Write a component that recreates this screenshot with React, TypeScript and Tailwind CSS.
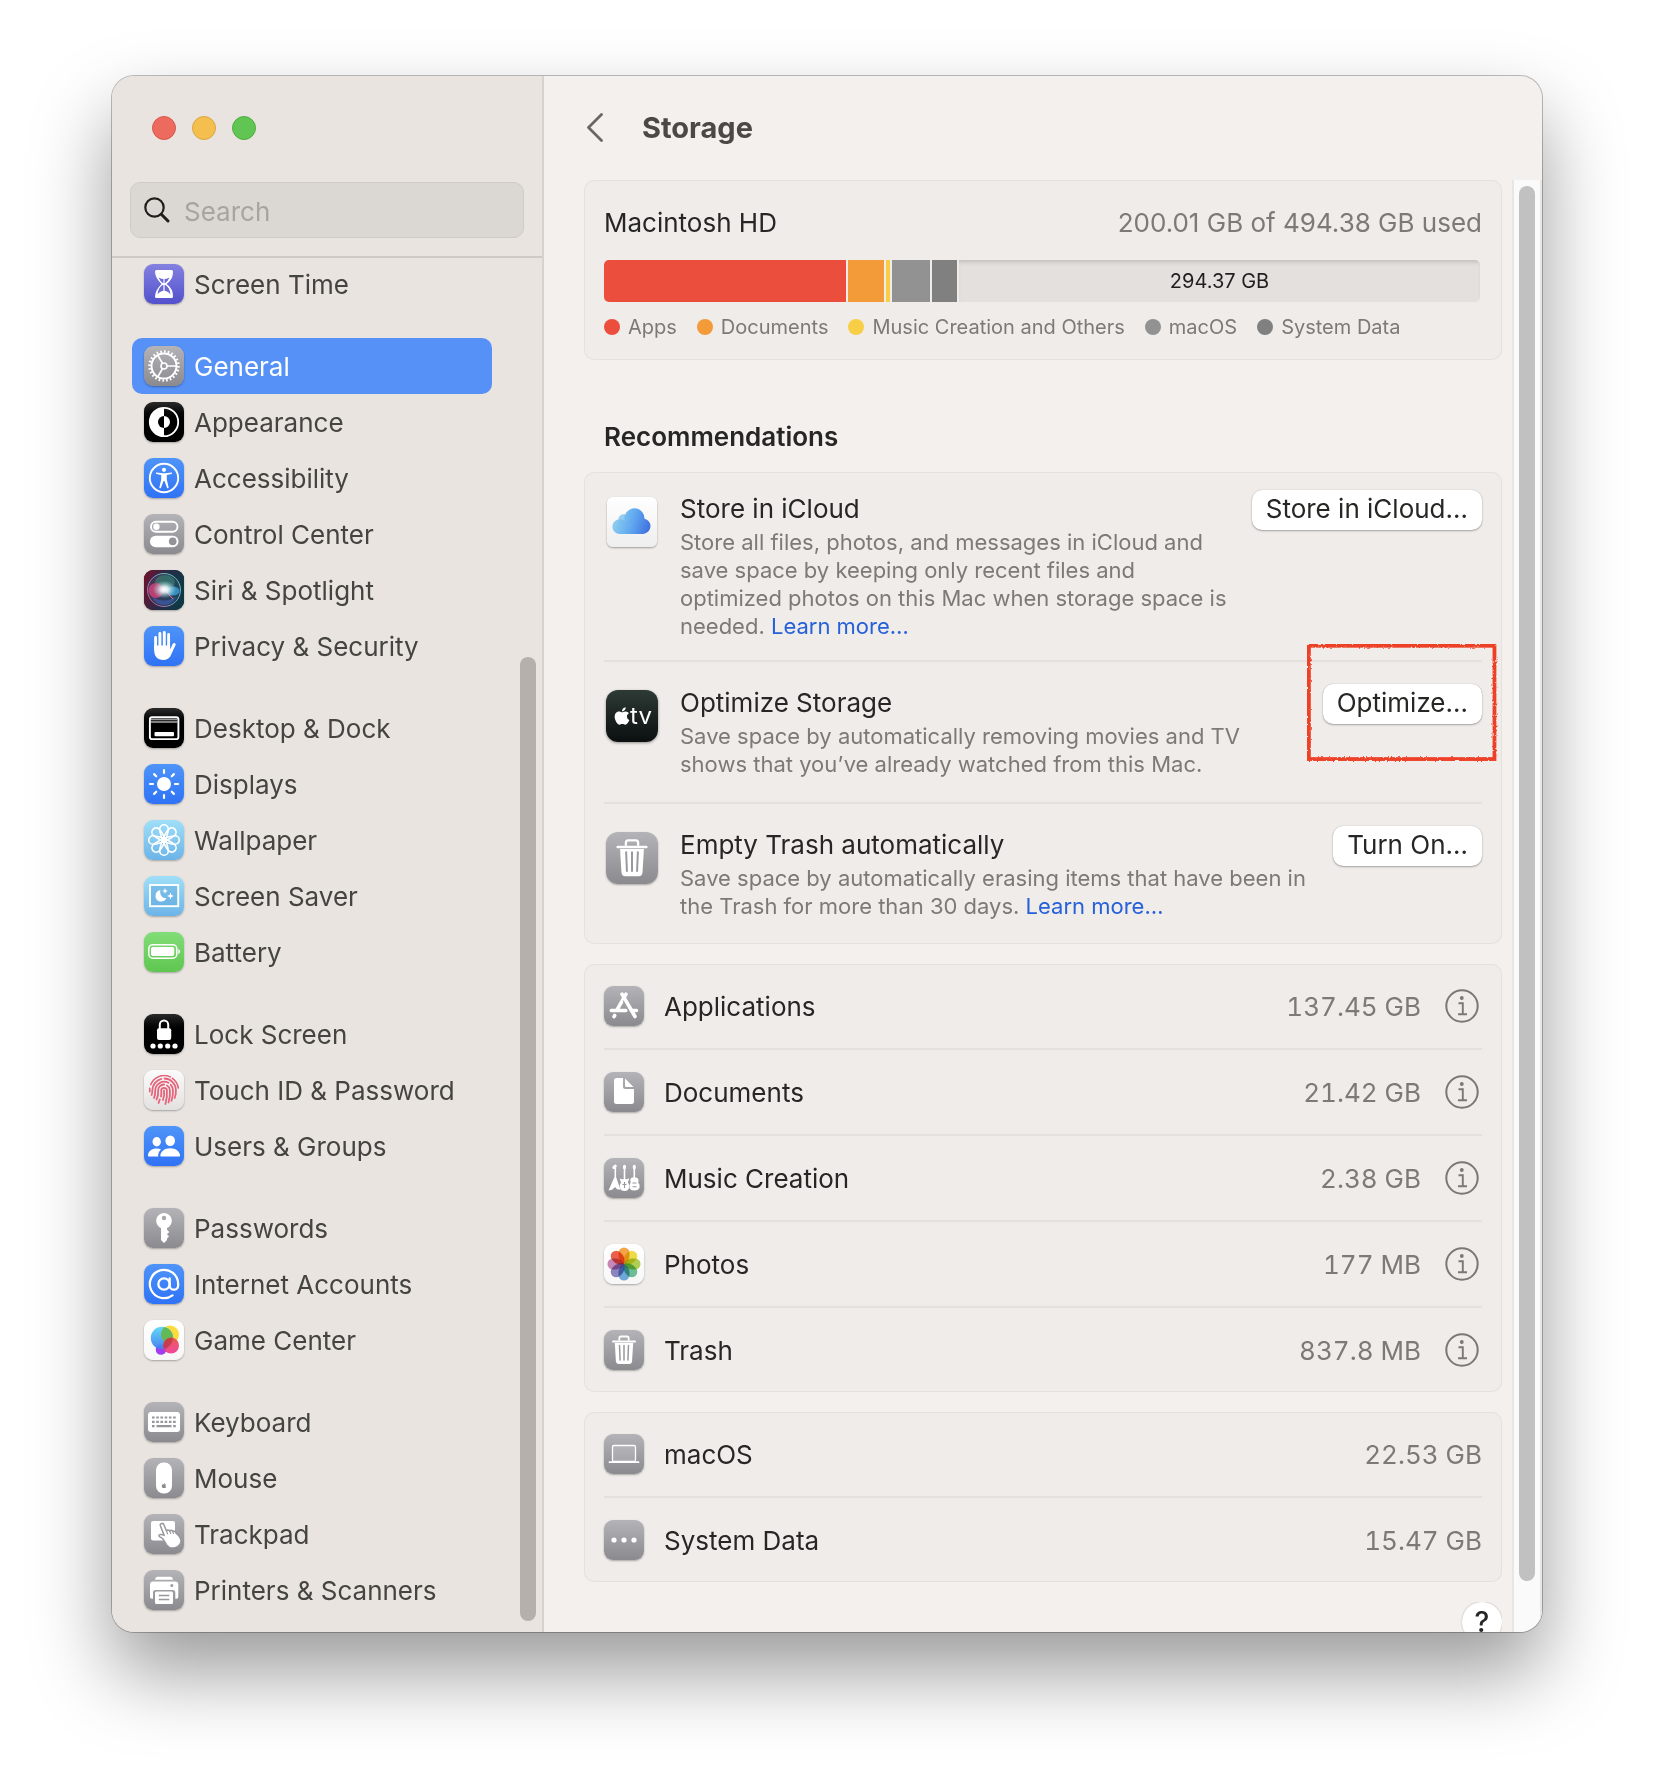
import { useId, type ReactNode } from "react";
import { AtSign } from "lucide-react";
import { FaApple } from "react-icons/fa";

const tones = {
  gray: "bg-linear-to-b from-[#b4b3b8] to-[#8b8a8f]",
  black: "bg-linear-to-b from-[#2b2b2b] via-black to-black",
  blue: "bg-linear-to-b from-[#4f94f8] to-[#2f72f6]",
  indigo: "bg-linear-to-b from-[#8481e0] to-[#5350cc]",
  sky: "bg-linear-to-b from-[#9fdff8] to-[#6cb4e8]",
  green: "bg-linear-to-b from-[#82dd78] to-[#5ec64f]",
  white: "bg-linear-to-b from-white to-[#f7f7f7]",
  silver: "bg-linear-to-b from-[#fbfbfb] to-[#e3e1e0]",
};

type Tone = keyof typeof tones;
type Item = { label: string; tone: Tone; icon: ReactNode };

function Glyph({ children }: { children: ReactNode }) {
  return (
    <svg viewBox="0 0 40 40" className="size-full" fill="none" aria-hidden="true">
      {children}
    </svg>
  );
}

function Tile({ tone, large, children }: { tone: Tone; large?: boolean; children: ReactNode }) {
  const size = large ? "size-[52px] rounded-xl" : "size-10 rounded-[9px]";
  return (
    <span
      className={`flex shrink-0 items-center justify-center overflow-hidden text-white shadow-[0_1px_2px_rgba(0,0,0,0.3)] ${size} ${tones[tone]}`}
    >
      {children}
    </span>
  );
}

const around = [0, 45, 90, 135, 180, 225, 270, 315];

function HourglassIcon() {
  return (
    <Glyph>
      <path
        fill="#fff"
        d="M12.5 6h15q1.500 0 1.500 1.500C29 13.500 27 16.500 22.500 20 27 23.500 29 26.500 29 32.500q0 1.500-1.500 1.500h-15Q11 34 11 32.500 11 26.500 17.500 20 11 13.500 11 7.500 11 6 12.500 6Z"
      />
      <path
        fill="#6c69d5"
        d="M14.500 13.500q5.500 3 11 0-1.500 3.500-4.500 5.700h-2q-3-2.200-4.500-5.700ZM18.500 21h3c3 2 4.500 5 5 9.500-2-2.500-4-3.500-6.500-3.700-2.500.2-4.500 1.200-6.500 3.700.5-4.500 2-7.500 5-9.500Z"
      />
      <path stroke="#fff" strokeWidth="1.2" d="M20 15v14" />
    </Glyph>
  );
}

function GearIcon() {
  return (
    <Glyph>
      <g stroke="#fff">
        <circle cx="20" cy="20" r="12.5" strokeWidth="2" />
        <circle cx="20" cy="20" r="14.5" strokeWidth="2.5" pathLength="72" strokeDasharray="1.3 1.7" />
        <circle cx="20" cy="20" r="3" strokeWidth="1.6" />
        <path strokeWidth="1.7" d="M23 20h9M18.500 17.400 13.800 9.300M18.500 22.600l-4.700 8.100" />
      </g>
    </Glyph>
  );
}

function AppearanceIcon() {
  return (
    <Glyph>
      <circle cx="20" cy="20" r="14.2" stroke="#fff" strokeWidth="1.8" />
      <path fill="#fff" d="M20 5.800a14.200 14.200 0 0 0 0 28.400ZM20 14a6 6 0 0 1 0 12Z" />
      <path fill="#000" d="M20 14a6 6 0 0 0 0 12Z" />
    </Glyph>
  );
}

function AccessibilityIcon() {
  return (
    <Glyph>
      <circle cx="20" cy="20" r="14.2" stroke="#fff" strokeWidth="1.9" />
      <circle cx="20" cy="11.8" r="2.1" fill="#fff" />
      <path
        fill="#fff"
        d="M12.800 14.400 18.500 15.200h3l5.700-.8a.8.800 0 0 1 .2 1.600l-4.600 1v4.500l1.800 7.700a.8.800 0 0 1-1.600.5L20.500 23h-1L17 29.700a.8.800 0 0 1-1.600-.5l1.800-7.700V17l-4.600-1a.8.800 0 0 1 .2-1.600Z"
      />
    </Glyph>
  );
}

function ControlCenterIcon() {
  return (
    <Glyph>
      <rect x="7" y="7.7" width="26.5" height="10" rx="5" stroke="#fff" strokeWidth="1.9" />
      <circle cx="12.4" cy="12.7" r="3.2" fill="#fff" />
      <rect x="6" y="21.7" width="28.5" height="11.5" rx="5.7" fill="#fff" />
      <circle cx="28.7" cy="27.4" r="3.8" fill="#949398" />
    </Glyph>
  );
}

function SiriIcon() {
  const id = useId();
  return (
    <Glyph>
      <defs>
        <linearGradient id={`${id}bg`} x1="0" y1="0.3" x2="1" y2="0.6">
          <stop offset="0" stopColor="#6a1430" />
          <stop offset="0.5" stopColor="#262c48" />
          <stop offset="1" stopColor="#0d3a44" />
        </linearGradient>
        <radialGradient id={`${id}glow`}>
          <stop offset="0" stopColor="#fff" />
          <stop offset="0.3" stopColor="#f1fafc" stopOpacity="0.9" />
          <stop offset="1" stopColor="#8fd6dd" stopOpacity="0" />
        </radialGradient>
        <linearGradient id={`${id}ring`} x1="0" y1="1" x2="1" y2="0">
          <stop offset="0" stopColor="#d8447a" />
          <stop offset="0.5" stopColor="#6c9fd8" />
          <stop offset="1" stopColor="#5fd0a0" />
        </linearGradient>
      </defs>
      <rect width="40" height="40" fill={`url(#${id}bg)`} />
      <circle cx="20" cy="20" r="16.5" fill="#3b5878" fillOpacity="0.4" stroke={`url(#${id}ring)`} strokeWidth="1" />
      <ellipse cx="21" cy="12" rx="10" ry="7" fill="#3fae84" fillOpacity="0.4" />
      <circle cx="12" cy="20.5" r="7.5" fill="#e2437d" fillOpacity="0.75" />
      <ellipse cx="29" cy="21" rx="6.5" ry="4.5" fill="#3ba5e0" fillOpacity="0.75" />
      <path d="M8 27q12 7 24 0-4 8-12 8T8 27Z" fill="#4567cc" fillOpacity="0.5" />
      <path d="m20 19 9 10" stroke="#e8739c" strokeWidth="1" />
      <ellipse cx="20.5" cy="19.5" rx="12" ry="9" fill={`url(#${id}glow)`} />
    </Glyph>
  );
}

function HandIcon() {
  return (
    <Glyph>
      <g stroke="#fff" strokeLinecap="round" strokeWidth="2.9">
        <path d="M11.600 11.500V24M15.900 7.500V22M20.300 6.500V22M24.600 8.500V24" />
        <path strokeWidth="3" d="M30.200 18.500 26.500 26" />
      </g>
      <path fill="#fff" d="M10.200 19.500h15.900v4l3-1.500c-1.200 7-3.500 12-9.600 12-6.300 0-9.300-4-9.300-9.500Z" />
    </Glyph>
  );
}

function DesktopIcon() {
  return (
    <Glyph>
      <rect x="5.9" y="9.3" width="28.5" height="21.8" rx="2.2" stroke="#fff" strokeWidth="1.9" />
      <path stroke="#9b9b9b" strokeWidth="1.4" d="M7 11.500h26.400" />
      <path stroke="#fff" strokeWidth="1" d="M7 14h26.400" />
      <rect x="10.5" y="24" width="19.5" height="4.3" rx="1" fill="#fff" />
    </Glyph>
  );
}

function SunIcon() {
  return (
    <Glyph>
      <circle cx="20" cy="20" r="7" fill="#fff" />
      {around.map((a) => (
        <path key={a} d="M20 6v3" stroke="#fff" strokeWidth="2.2" strokeLinecap="round" transform={`rotate(${a} 20 20)`} />
      ))}
    </Glyph>
  );
}

function FlowerIcon() {
  return (
    <Glyph>
      {around.map((a) => (
        <path
          key={a}
          d="M20 22C18.500 22 15.700 12 15.700 9a4.300 4.300 0 0 1 8.600 0C24.300 12 21.500 22 20 22Z"
          stroke="#fff"
          strokeWidth="1.6"
          transform={`rotate(${a} 20 20)`}
        />
      ))}
    </Glyph>
  );
}

function ScreenSaverIcon() {
  return (
    <Glyph>
      <rect x="6" y="9" width="28.2" height="21.2" stroke="#fff" strokeWidth="1.9" fill="#5fa6dc" fillOpacity="0.45" />
      <path
        fill="#fff"
        d="M16.300 14c-.8 5.200 2 8.600 6.200 8-1.200 2.400-3 3.500-5.300 3.500-3.200 0-5.700-2.300-5.700-5.600 0-2.900 1.900-5.200 4.800-5.900Z"
      />
      <path
        fill="#fff"
        d="m21 12 .8 2.200L24 15l-2.200.8L21 18l-.8-2.200L18 15l2.200-.8ZM26.500 16.500l.9 2.600 2.600.9-2.600.9-.9 2.600-.9-2.600-2.600-.9 2.600-.9Z"
      />
    </Glyph>
  );
}

function BatteryIcon() {
  return (
    <Glyph>
      <rect x="4.8" y="12.7" width="28" height="13.5" rx="4" stroke="#fff" strokeWidth="1.5" />
      <rect x="7" y="15" width="23.3" height="9" rx="2" fill="#fff" />
      <path fill="#fff" d="M34.300 17q1.800.8 1.800 2.500t-1.800 2.500Z" />
    </Glyph>
  );
}

function LockIcon() {
  return (
    <Glyph>
      <path stroke="#fff" strokeWidth="2" d="M15.800 15v-4.300a4.200 4.200 0 0 1 8.400 0V15" />
      <rect x="13" y="14.3" width="14.2" height="11.7" rx="2" fill="#fff" />
      {[9, 16.3, 23.7, 31].map((x) => (
        <circle key={x} cx={x} cy="32" r="2.6" fill="#fff" />
      ))}
    </Glyph>
  );
}

function FingerprintIcon() {
  const id = useId();
  return (
    <Glyph>
      <clipPath id={id}>
        <circle cx="20" cy="20" r="15.3" />
      </clipPath>
      <g clipPath={`url(#${id})`} stroke="#e5647c" strokeWidth="1.8" strokeLinecap="round">
        <path d="M20 20.500q.8 5-1 9.500" />
        <path d="M17 26.500q.6-3 .2-6a2.900 2.900 0 0 1 5.700-.5q.6 7-1.500 14M15.800 29.500l-1.300 3.500" />
        <path d="M12.500 29.500q2-4 1.600-8.500a6 6 0 0 1 6-6.500M23 15.500a6 6 0 0 1 2.900 4.500q.6 6-1.400 12.500" />
        <path d="M10 28q1.500-3.500 1.200-7.500a9 9 0 0 1 13.300-7.700M26.800 14.800a9 9 0 0 1 2.100 5q.5 5.500-1.400 11" />
        <path d="M7.600 25q.8-2 .7-4.500a12 12 0 0 1 9-11.600M20.500 8.500a11.800 11.800 0 0 1 11.400 11q.3 5-1.200 8.500" />
        <path d="M5.700 21.500v-3M6.700 14.500a14.600 14.600 0 0 1 19.500-7.700M28.500 8.300a14.600 14.600 0 0 1 5.900 9.500" />
      </g>
    </Glyph>
  );
}

function UsersIcon() {
  return (
    <Glyph>
      <ellipse cx="12.7" cy="15.7" rx="4.2" ry="4.7" fill="#fff" />
      <path fill="#fff" d="M4.800 30.500Q3.800 30.500 4 29c.5-4 4-6.500 8.700-6.500q2.300 0 4.300.8-2.500 2.300-2.800 5.700-.1 1 .1 1.500Z" />
      <ellipse cx="26.2" cy="14.8" rx="4.8" ry="5.3" fill="#fff" />
      <path fill="#fff" d="M17.300 30.500q-1.200 0-1-1.300c.6-4.200 4.500-7 9.900-7s9.300 2.800 9.900 7q.2 1.300-1 1.300Z" />
    </Glyph>
  );
}

function KeyIcon() {
  return (
    <Glyph>
      <path
        fill="#fff"
        fillRule="evenodd"
        d="M20 5a7.800 7.800 0 0 1 3 15v1.800l2.300 2.200-2.300 2.300 2 2.200-2 2v1.500L20 35l-3-3V20a7.800 7.800 0 0 1 3-15Zm0 2.800a2.200 2.200 0 1 0 0 4.400 2.200 2.200 0 0 0 0-4.400Z"
      />
    </Glyph>
  );
}

function GameCenterIcon() {
  const id = useId();
  return (
    <Glyph>
      <defs>
        <linearGradient id={`${id}b`} x1="0" y1="0" x2="0" y2="1">
          <stop offset="0" stopColor="#5cd6f7" />
          <stop offset="1" stopColor="#3d7df0" />
        </linearGradient>
        <linearGradient id={`${id}r`} x1="0" y1="0" x2="0" y2="1">
          <stop offset="0" stopColor="#e8504c" />
          <stop offset="1" stopColor="#f03a92" />
        </linearGradient>
      </defs>
      <circle cx="17" cy="29.5" r="5.3" fill="#a13cf0" />
      <circle cx="26" cy="14.5" r="9" fill="#fbdc3a" />
      <circle cx="18" cy="18" r="11.2" fill={`url(#${id}b)`} fillOpacity="0.95" />
      <path fill="#63b956" d="M26.800 11a11.200 11.200 0 0 1 0 12.500A9 9 0 0 1 18.600 9.500a9 9 0 0 1 1.500-2.500q4.400.8 6.700 4Z" />
      <circle cx="27" cy="25.5" r="8" fill={`url(#${id}r)`} fillOpacity="0.93" />
      <path fill="#b0333c" fillOpacity="0.6" d="M28.700 18a12 12 0 0 1-8.800 11 8 8 0 0 1 8.800-11Z" />
    </Glyph>
  );
}

function KeyboardIcon() {
  return (
    <Glyph>
      <rect x="4" y="10" width="32" height="20" rx="3" fill="#fff" />
      <g stroke="#96959a" strokeWidth="2.2">
        <path strokeDasharray="2.6 1.62" d="M8 15.500h24M8 19.800h24" />
        <path d="M8 24.100h2.600M12.500 24.100h15M29.200 24.100h2.600" />
      </g>
    </Glyph>
  );
}

function MouseIcon() {
  return (
    <Glyph>
      <rect x="12" y="4.5" width="16" height="31" rx="7.5" fill="#fff" />
      <FaApple x="17" y="24.5" size="6" color="#8b8a8f" />
    </Glyph>
  );
}

function TrackpadIcon() {
  return (
    <Glyph>
      <rect x="7" y="7" width="24" height="19.5" rx="2" fill="#fff" />
      <path
        fill="#fff"
        stroke="#98979c"
        strokeWidth="1.5"
        strokeLinejoin="round"
        d="M16.300 11.500c-.6-2 2.700-3 3.500-1l2.700 6.500c.8-1.500 2.700-1.300 3.200 0 .9-1.100 2.500-.8 3 .5 1.100-.9 2.600-.3 3 1.200l3.500 3.600c2.500 3.500 2.300 7-.5 9.500-3.700 3.400-9.300 3-12-1l-3.800-6c-1.200-1-4-2-4-3 0-1.500 2.200-1.600 4-1 .8.300 1.300.7 1.300.7Z"
      />
      <path stroke="#98979c" strokeWidth="1.1" strokeLinecap="round" d="m22.500 17 1.200 3M25.700 17l1 2.500M28.700 17.500l.8 2" />
    </Glyph>
  );
}

function PrinterIcon() {
  return (
    <Glyph>
      <path fill="#fff" d="M13.500 6.800h13q2 0 2.500 3H11q.5-3 2.500-3Z" />
      <path
        fill="#fff"
        d="M9 11.500h22q3.300 0 3.300 3.300v12q0 2-2 2h-1V22.500q0-2.500-2.500-2.500H11.500Q9 20 9 22.500v6.300H8q-2 0-2-2v-12q0-3.300 3-3.300Z"
      />
      <circle cx="27.8" cy="15.5" r="1.5" fill="#9b9a9f" />
      <rect x="11" y="21.5" width="18" height="12.5" rx="1.5" fill="#fff" />
      <path stroke="#98979c" strokeWidth="1.3" d="M14.800 25.500h10.500M14.800 29.500h10.500" />
    </Glyph>
  );
}

function AppStoreIcon() {
  return (
    <Glyph>
      <g stroke="#fff" strokeWidth="3.6" strokeLinecap="round">
        <path d="M18 8.200 31 30.500" />
        <path d="m22 8.200-8.800 15.500" />
        <path d="M7.300 24.500h14.500M28.500 24.500h4" />
        <path d="m10.700 29.500-.7 1.200" />
      </g>
      <path stroke="#a3a2a7" strokeWidth="1" d="m19 14.500 6.500 12" />
    </Glyph>
  );
}

function DocumentIcon() {
  return (
    <Glyph>
      <path
        fill="#fff"
        d="M12.500 6H19v8.500q0 2.500 2.500 2.500H30v12.500q0 2.500-2.500 2.500h-15q-2.500 0-2.500-2.500v-21Q10 6 12.500 6Z"
      />
      <path fill="#fff" d="M21 6.500 29.500 15h-7.300Q21 15 21 13.800Z" />
    </Glyph>
  );
}

function GuitarsIcon() {
  return (
    <Glyph>
      <g stroke="#fff" strokeWidth="1.6" strokeLinecap="round">
        <path d="M11.300 8.500V22M20.500 9v13M30.300 9v12" />
        <path strokeWidth="3" d="m9.800 9.500 1.500-1.500M20.500 8.300v1.500M30.300 8.300v1.500" />
      </g>
      <path fill="#fff" d="m10.200 19.500 2.200.2 4 12-3.400-.5-2-2.200-2.500 2.600-4 .8Z" />
      <path
        fill="#fff"
        d="M16 20.500q2 1.500 4.500.3 2.500 1.200 4.500-.8.300 2-1.200 4 1.800 2.500 1.400 5.500-1 3.500-4.700 3.500t-4.700-3.500q-.4-3 1.400-5.500-1.500-1.500-1.200-3.500Z"
      />
      <path
        fill="#fff"
        d="M27 20q3-1.500 6.500 0 2 2 .7 4.500 2.300 2.500 1.300 5.500-1.500 2.500-5.200 2.500T25.500 30q-.6-3 1.200-5.500-1.200-2.500.3-4.500Z"
      />
      <path stroke="#98979c" strokeWidth="1.1" d="M18.500 26.500h4M20.500 24v6M28.500 25h4M28.500 28.800h4" />
    </Glyph>
  );
}

const petals = ["#f39a2c", "#ecd92f", "#aacb3c", "#5db98a", "#5f9fd8", "#7f78b8", "#c07ab0", "#ea4a34"];

function PhotosIcon() {
  return (
    <Glyph>
      {petals.map((color, i) => (
        <path
          key={color}
          d="M20 20c-4-2.500-5.500-5.500-5.500-8.500V9a5.500 5.500 0 0 1 11 0v2.500c0 3-1.500 6-5.500 8.500Z"
          fill={color}
          fillOpacity="0.88"
          className="mix-blend-multiply"
          transform={`rotate(${i * 45} 20 20)`}
        />
      ))}
    </Glyph>
  );
}

function TrashIcon() {
  return (
    <Glyph>
      <path stroke="#fff" strokeWidth="1.8" d="M15.300 10.500V8.300q0-1.800 1.800-1.800h5.800q1.800 0 1.800 1.800v2.200" />
      <path stroke="#fff" strokeWidth="2" strokeLinecap="round" d="M9 11.500h22" />
      <path fill="#fff" d="M10.800 13h18.400l-1.100 18q-.2 3-3 3H14.900q-2.800 0-3-3Z" />
      <path stroke="#98979c" strokeWidth="1.5" strokeLinecap="round" d="m15.500 15.500.6 14.500M20 15.500V30M24.500 15.500 23.900 30" />
    </Glyph>
  );
}

function LaptopIcon() {
  return (
    <Glyph>
      <rect x="8.5" y="11.5" width="23" height="16" rx="1.5" stroke="#fff" strokeWidth="1.3" fill="#fff" fillOpacity="0.15" />
      <path stroke="#fff" strokeWidth="1.8" strokeLinecap="round" d="M5.500 28.200h29" />
    </Glyph>
  );
}

function DotsIcon() {
  return (
    <Glyph>
      {[10, 20, 30].map((x) => (
        <circle key={x} cx={x} cy="20" r="2.6" fill="#fff" />
      ))}
    </Glyph>
  );
}

function CloudIcon() {
  const id = useId();
  return (
    <Glyph>
      <defs>
        <linearGradient id={id} x1="0" y1="0.5" x2="1" y2="0.7">
          <stop offset="0" stopColor="#8fd0ef" />
          <stop offset="0.5" stopColor="#62aaf0" />
          <stop offset="1" stopColor="#4070e0" />
        </linearGradient>
      </defs>
      <path
        fill={`url(#${id})`}
        d="M10 29.500a5.800 5.800 0 0 1-1-11.500 4.500 4.500 0 0 1 5.600-4A8 8 0 0 1 30 17.300a6.200 6.200 0 0 1-.8 12.200Z"
      />
      <path fill="#fff" fillOpacity="0.2" d="M14.500 14q-1.500 3 .5 6-2-3-6-2a4.500 4.500 0 0 1 5.500-4Z" />
    </Glyph>
  );
}

function InfoIcon() {
  return (
    <svg viewBox="0 0 34 34" className="size-[34px]" fill="none" aria-hidden="true">
      <circle cx="17" cy="17" r="15.7" stroke="#7b7773" strokeWidth="2" />
      <circle cx="16.8" cy="9" r="1.9" fill="#7b7773" />
      <path stroke="#7b7773" strokeWidth="1.9" d="M13.500 14.200h4.300v10.700M13 25.200h9" />
    </svg>
  );
}

const sidebar: Item[][] = [
  [{ label: "Screen Time", tone: "indigo", icon: <HourglassIcon /> }],
  [
    { label: "General", tone: "gray", icon: <GearIcon /> },
    { label: "Appearance", tone: "black", icon: <AppearanceIcon /> },
    { label: "Accessibility", tone: "blue", icon: <AccessibilityIcon /> },
    { label: "Control Center", tone: "gray", icon: <ControlCenterIcon /> },
    { label: "Siri & Spotlight", tone: "black", icon: <SiriIcon /> },
    { label: "Privacy & Security", tone: "blue", icon: <HandIcon /> },
  ],
  [
    { label: "Desktop & Dock", tone: "black", icon: <DesktopIcon /> },
    { label: "Displays", tone: "blue", icon: <SunIcon /> },
    { label: "Wallpaper", tone: "sky", icon: <FlowerIcon /> },
    { label: "Screen Saver", tone: "sky", icon: <ScreenSaverIcon /> },
    { label: "Battery", tone: "green", icon: <BatteryIcon /> },
  ],
  [
    { label: "Lock Screen", tone: "black", icon: <LockIcon /> },
    { label: "Touch ID & Password", tone: "silver", icon: <FingerprintIcon /> },
    { label: "Users & Groups", tone: "blue", icon: <UsersIcon /> },
  ],
  [
    { label: "Passwords", tone: "gray", icon: <KeyIcon /> },
    { label: "Internet Accounts", tone: "blue", icon: <AtSign size={34} strokeWidth={1.6} /> },
    { label: "Game Center", tone: "white", icon: <GameCenterIcon /> },
  ],
  [
    { label: "Keyboard", tone: "gray", icon: <KeyboardIcon /> },
    { label: "Mouse", tone: "gray", icon: <MouseIcon /> },
    { label: "Trackpad", tone: "gray", icon: <TrackpadIcon /> },
    { label: "Printers & Scanners", tone: "gray", icon: <PrinterIcon /> },
  ],
];

// Widths are percentages of the whole disk bar.
const segments = [
  { label: "Apps", share: 27.63, color: "bg-[#eb4e3d]" },
  { label: "Documents", share: 4.11, color: "bg-[#f29b38]" },
  { label: "Music Creation and Others", share: 0.46, color: "bg-[#f7ce46]" },
  { label: "macOS", share: 4.34, color: "bg-[#929292]" },
  { label: "System Data", share: 2.85, color: "bg-[#808080]" },
];

const categories: (Item & { size: string })[] = [
  { label: "Applications", tone: "gray", icon: <AppStoreIcon />, size: "137.45 GB" },
  { label: "Documents", tone: "gray", icon: <DocumentIcon />, size: "21.42 GB" },
  { label: "Music Creation", tone: "gray", icon: <GuitarsIcon />, size: "2.38 GB" },
  { label: "Photos", tone: "white", icon: <PhotosIcon />, size: "177 MB" },
  { label: "Trash", tone: "gray", icon: <TrashIcon />, size: "837.8 MB" },
];

const system: (Item & { size: string })[] = [
  { label: "macOS", tone: "gray", icon: <LaptopIcon />, size: "22.53 GB" },
  { label: "System Data", tone: "gray", icon: <DotsIcon />, size: "15.47 GB" },
];

function Sidebar() {
  return (
    <aside className="flex w-[432px] shrink-0 flex-col border-r-2 border-[#d6d2ce] bg-[#e9e4e0]">
      <div className="flex gap-4 px-10 pt-10">
        <button aria-label="Close" className="size-6 rounded-full border border-[#d8584c] bg-[#ed6a5e]" />
        <button aria-label="Minimize" className="size-6 rounded-full border border-[#dca43f] bg-[#f5bf4f]" />
        <button aria-label="Zoom" className="size-6 rounded-full border border-[#51ac42] bg-[#61c554]" />
      </div>
      <div className="px-[18px] pt-[42px] pb-[18px]">
        <label className="flex h-14 items-center gap-3.5 rounded-[10px] border border-[#cfcbc6] bg-[#dbd7d2] px-[13px]">
          <svg viewBox="0 0 26 26" className="size-[26px] shrink-0" fill="none" stroke="#1f1e1d" aria-hidden="true">
            <circle cx="10.5" cy="10.5" r="9.2" strokeWidth="2.2" />
            <path d="m17.300 17.300 6.700 6.700" strokeWidth="3" strokeLinecap="round" />
          </svg>
          <input
            type="text"
            placeholder="Search"
            aria-label="Search"
            className="w-full bg-transparent pt-0.5 text-[26px] outline-none placeholder:text-[#a8a4a0]"
          />
        </label>
      </div>
      <div className="flex flex-1 border-t-2 border-[#cec9c5]">
        <nav className="-mt-0.5 flex flex-1 flex-col gap-[26px] pb-3.5 pl-5">
          {sidebar.map((group) => (
            <ul key={group[0].label}>
              {group.map((item) => (
                <li key={item.label}>
                  <a
                    href="#"
                    className={`flex h-14 items-center gap-2.5 rounded-[10px] pl-3 text-[26px] whitespace-nowrap ${
                      item.label === "General" ? "bg-[#5591f6] text-white" : "text-[#454441]"
                    }`}
                  >
                    <Tile tone={item.tone}>{item.icon}</Tile>
                    <span className="pt-px">{item.label}</span>
                  </a>
                </li>
              ))}
            </ul>
          ))}
        </nav>
        <div className="flex w-[50px] flex-col items-end pt-[399px] pr-1.5 pb-[11px]">
          <div className="w-4 flex-1 rounded-full bg-[#b5b0ac]" />
        </div>
      </div>
    </aside>
  );
}

function Card({ children }: { children: ReactNode }) {
  return <div className="rounded-[10px] bg-[#f0ece9] px-5 ring-1 ring-[#e5e1de] ring-inset">{children}</div>;
}

function DiskUsage() {
  return (
    <Card>
      <div className="flex items-center justify-between pt-[25px] text-[26px] leading-9">
        <h2 className="text-[#262624]">Macintosh HD</h2>
        <span className="text-[#7d7975]">200.01 GB of 494.38 GB used</span>
      </div>
      <div className="mt-[19px] mr-0.5 flex h-[42px] gap-0.5 overflow-hidden rounded-[5px]">
        {segments.map((s) => (
          <div key={s.label} className={s.color} style={{ width: `${s.share}%` }} />
        ))}
        <div className="flex flex-1 items-center justify-center bg-[#e4e0dd] text-[20px] text-[#1f1e1d] shadow-[inset_0_4px_4px_-2px_rgba(0,0,0,0.16)]">
          294.37 GB
        </div>
      </div>
      <ul className="flex gap-5 pt-3 pb-5 text-[20px] leading-[26px] text-[#7d7975]">
        {segments.map((s) => (
          <li key={s.label} className="flex items-center gap-2 whitespace-nowrap">
            <span className={`size-4 rounded-full ${s.color}`} />
            {s.label}
          </li>
        ))}
      </ul>
    </Card>
  );
}

function PushButton({ children }: { children: ReactNode }) {
  return (
    <button className="h-10 rounded-[10px] bg-white px-3.5 pb-0.5 text-[26px] leading-[38px] whitespace-nowrap text-[#262624] shadow-[0_1px_2px_rgba(0,0,0,0.3),0_0_1px_rgba(0,0,0,0.25)]">
      {children}
    </button>
  );
}

type RecommendationProps = { icon: ReactNode; title: string; action: ReactNode; children: ReactNode };

function Recommendation({ icon, title, action, children }: RecommendationProps) {
  return (
    <section className="flex items-start border-[#e4e0dd] pt-[22px] pb-6 not-last:border-b-2 first:pt-[18px] first:pb-5">
      <div className="ml-0.5 pt-1.5">{icon}</div>
      <div className="ml-[22px] min-w-0 flex-1 pt-[3px]">
        <h3 className="text-[26px] leading-8 text-[#262624]">{title}</h3>
        <p className="pt-[3px] text-[22px] leading-7 text-[#7d7975]">{children}</p>
      </div>
      <div className="ml-[18px]">{action}</div>
    </section>
  );
}

// Hand-drawn marker frame around the button it wraps.
function MarkerFrame({ children }: { children: ReactNode }) {
  const id = useId();
  return (
    <div className="relative">
      {children}
      <svg className="pointer-events-none absolute -inset-x-4 -top-10 h-[118px] w-[calc(100%+32px)]" aria-hidden="true">
        <filter id={id} x="-5%" y="-5%" width="110%" height="110%">
          <feTurbulence type="fractalNoise" baseFrequency="0.5" numOctaves="2" seed="4" />
          <feDisplacementMap in="SourceGraphic" scale="3" />
        </filter>
        <rect
          x="1%"
          y="1.5%"
          width="97%"
          height="96%"
          fill="none"
          stroke="#ee4128"
          strokeWidth="3.8"
          filter={`url(#${id})`}
        />
      </svg>
    </div>
  );
}

function LearnMore() {
  return (
    <a href="#" className="text-[#2561d9]">
      Learn more…
    </a>
  );
}

function Recommendations() {
  return (
    <Card>
      <Recommendation
        icon={
          <span className="block size-[52px] p-px">
            <span className="block size-full rounded-md bg-linear-to-b from-white to-[#eeeeee] shadow-[0_1px_2px_rgba(0,0,0,0.35)]">
              <CloudIcon />
            </span>
          </span>
        }
        title="Store in iCloud"
        action={<PushButton>Store in iCloud…</PushButton>}
      >
        Store all files, photos, and messages in iCloud and save space by keeping only recent files and optimized
        photos on this Mac when storage space is needed. <LearnMore />
      </Recommendation>
      <Recommendation
        icon={
          <span className="flex size-[52px] items-center justify-center rounded-xl bg-linear-to-b from-[#2e3b35] to-[#0b0f10] text-[24px] leading-none text-white shadow-[0_1px_3px_rgba(0,0,0,0.4)]">
            <FaApple size={20} className="-mr-0.5" />
            tv
          </span>
        }
        title="Optimize Storage"
        action={
          <MarkerFrame>
            <PushButton>Optimize…</PushButton>
          </MarkerFrame>
        }
      >
        Save space by automatically removing movies and TV shows that you’ve already watched from this Mac.
      </Recommendation>
      <Recommendation
        icon={
          <Tile tone="gray" large>
            <TrashIcon />
          </Tile>
        }
        title="Empty Trash automatically"
        action={<PushButton>Turn On…</PushButton>}
      >
        Save space by automatically erasing items that have been in the Trash for more than 30 days. <LearnMore />
      </Recommendation>
    </Card>
  );
}

function SizeList({ rows, info }: { rows: (Item & { size: string })[]; info?: boolean }) {
  return (
    <Card>
      <ul className="divide-y-2 divide-[#e4e0dd]">
        {rows.map((row) => (
          <li key={row.label} className="box-content flex h-[84px] items-center text-[26px]">
            <Tile tone={row.tone}>{row.icon}</Tile>
            <span className="ml-5 flex-1 text-[#262624]">{row.label}</span>
            <span className="text-[#7d7975] tabular-nums">{row.size}</span>
            {info && (
              <button aria-label={`Show ${row.label} details`} className="mr-[3px] ml-6">
                <InfoIcon />
              </button>
            )}
          </li>
        ))}
      </ul>
    </Card>
  );
}

export default function App() {
  return (
    <div className="min-h-screen bg-white px-28 pt-[76px] pb-[148px] font-['Inter','Liberation_Sans',sans-serif]">
      <div className="flex overflow-hidden rounded-[22px] bg-[#f4f0ed] shadow-[0_0_0_1px_rgba(0,0,0,0.25),0_40px_80px_rgba(0,0,0,0.4)]">
        <Sidebar />
        <main className="flex min-w-0 flex-1 flex-col">
          <header className="flex h-[104px] items-center gap-[38px] pl-[42px]">
            <button aria-label="Back">
              <svg viewBox="0 0 18 30" className="h-[30px] w-[18px]" fill="none" aria-hidden="true">
                <path
                  d="M15.500 1.500 2.500 14.500l13 13"
                  stroke="#6a6663"
                  strokeWidth="2.8"
                  strokeLinecap="round"
                  strokeLinejoin="round"
                />
              </svg>
            </button>
            <h1 className="text-[29px] font-bold text-[#4a4946]">Storage</h1>
          </header>
          <div className="flex flex-1">
            <div className="flex min-w-0 flex-1 flex-col gap-5 pr-2.5 pl-10">
              <DiskUsage />
              <h2 className="mt-[42px] px-5 text-[26px] leading-[30px] font-semibold text-[#262624]">
                Recommendations
              </h2>
              <Recommendations />
              <SizeList rows={categories} info />
              <SizeList rows={system} />
              <div className="flex h-[30px] justify-end overflow-hidden">
                <button
                  aria-label="Help"
                  className="size-10 shrink-0 rounded-full bg-white text-[28px] leading-10 font-medium text-[#262624] shadow-[0_0_2px_rgba(0,0,0,0.3)]"
                >
                  ?
                </button>
              </div>
            </div>
            <div className="flex w-[30px] flex-col items-center border-x-2 border-[#e8e6e5] bg-[#fafafa] pt-1.5 pb-[51px]">
              <div className="w-4 flex-1 rounded-full bg-[#c1c1c1]" />
            </div>
          </div>
        </main>
      </div>
    </div>
  );
}
